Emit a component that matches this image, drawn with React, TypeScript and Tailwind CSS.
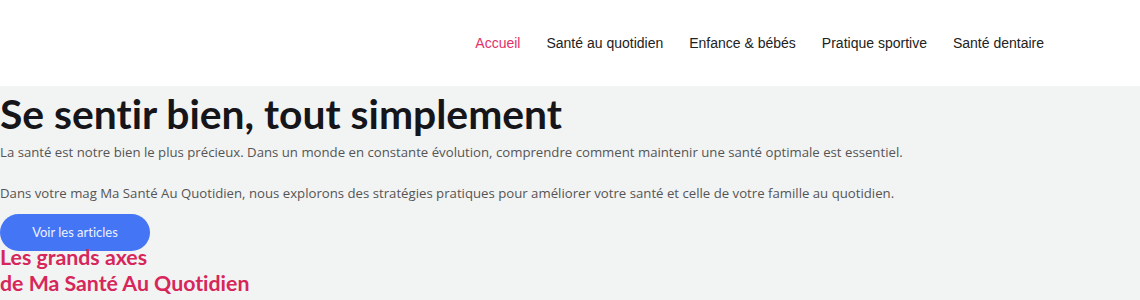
export default function App() {
  const links = [
    "Accueil",
    "Santé au quotidien",
    "Enfance & bébés",
    "Pratique sportive",
    "Santé dentaire",
  ];

  return (
    <div className="w-[1140px] h-[300px] overflow-hidden bg-[#f2f3f3] [font-variant-ligatures:none]">
      {/* header */}
      <header className="h-[86px] bg-white flex items-center justify-end pr-[96px]">
        <nav className="flex gap-[26px] font-['Liberation_Sans',Arial,sans-serif] text-[14px] text-[#222]">
          {links.map((l, i) => (
            <a key={l} href="#" className={i === 0 ? "text-[#e0316b]" : ""}>
              {l}
            </a>
          ))}
        </nav>
      </header>

      {/* hero */}
      <section className="pt-[4px]">
        <h1 className="font-['Lato',sans-serif] font-bold text-[40.8px] leading-[48px] text-[#15151a]">
          Se sentir bien, tout simplement
        </h1>
        <div className="font-['Open_Sans',sans-serif] text-[13.2px] leading-[24px] text-[#555]">
          <p className="mt-[2px]">
            La santé est notre bien le plus précieux. Dans un monde en constante évolution, comprendre comment maintenir une
            santé optimale est essentiel.
          </p>
          <p className="mt-[17px]">
            Dans votre mag Ma Santé Au Quotidien, nous explorons des stratégies pratiques pour améliorer votre santé et celle
            de votre famille au quotidien.
          </p>
        </div>
        <button className="mt-[9px] w-[150px] h-[37px] rounded-full bg-[#4475f5] text-[#eef2ff] font-['Lato',sans-serif] text-[13px]">
          Voir les articles
        </button>
        <h2 className="-mt-[7px] font-['Lato',sans-serif] font-bold text-[21.3px] leading-[26px] text-[#d6265a]">
          Les grands axes
          <br />
          de Ma Santé Au Quotidien
        </h2>
        <p className="-mt-[3px] font-['Open_Sans',sans-serif] font-semibold text-[13.2px] leading-[24px] text-[#555]">
          Au fil de nos articles, découvrez des conseils pratiques et des informations fiables pour prendre soin de vous.
        </p>
      </section>
    </div>
  );
}
